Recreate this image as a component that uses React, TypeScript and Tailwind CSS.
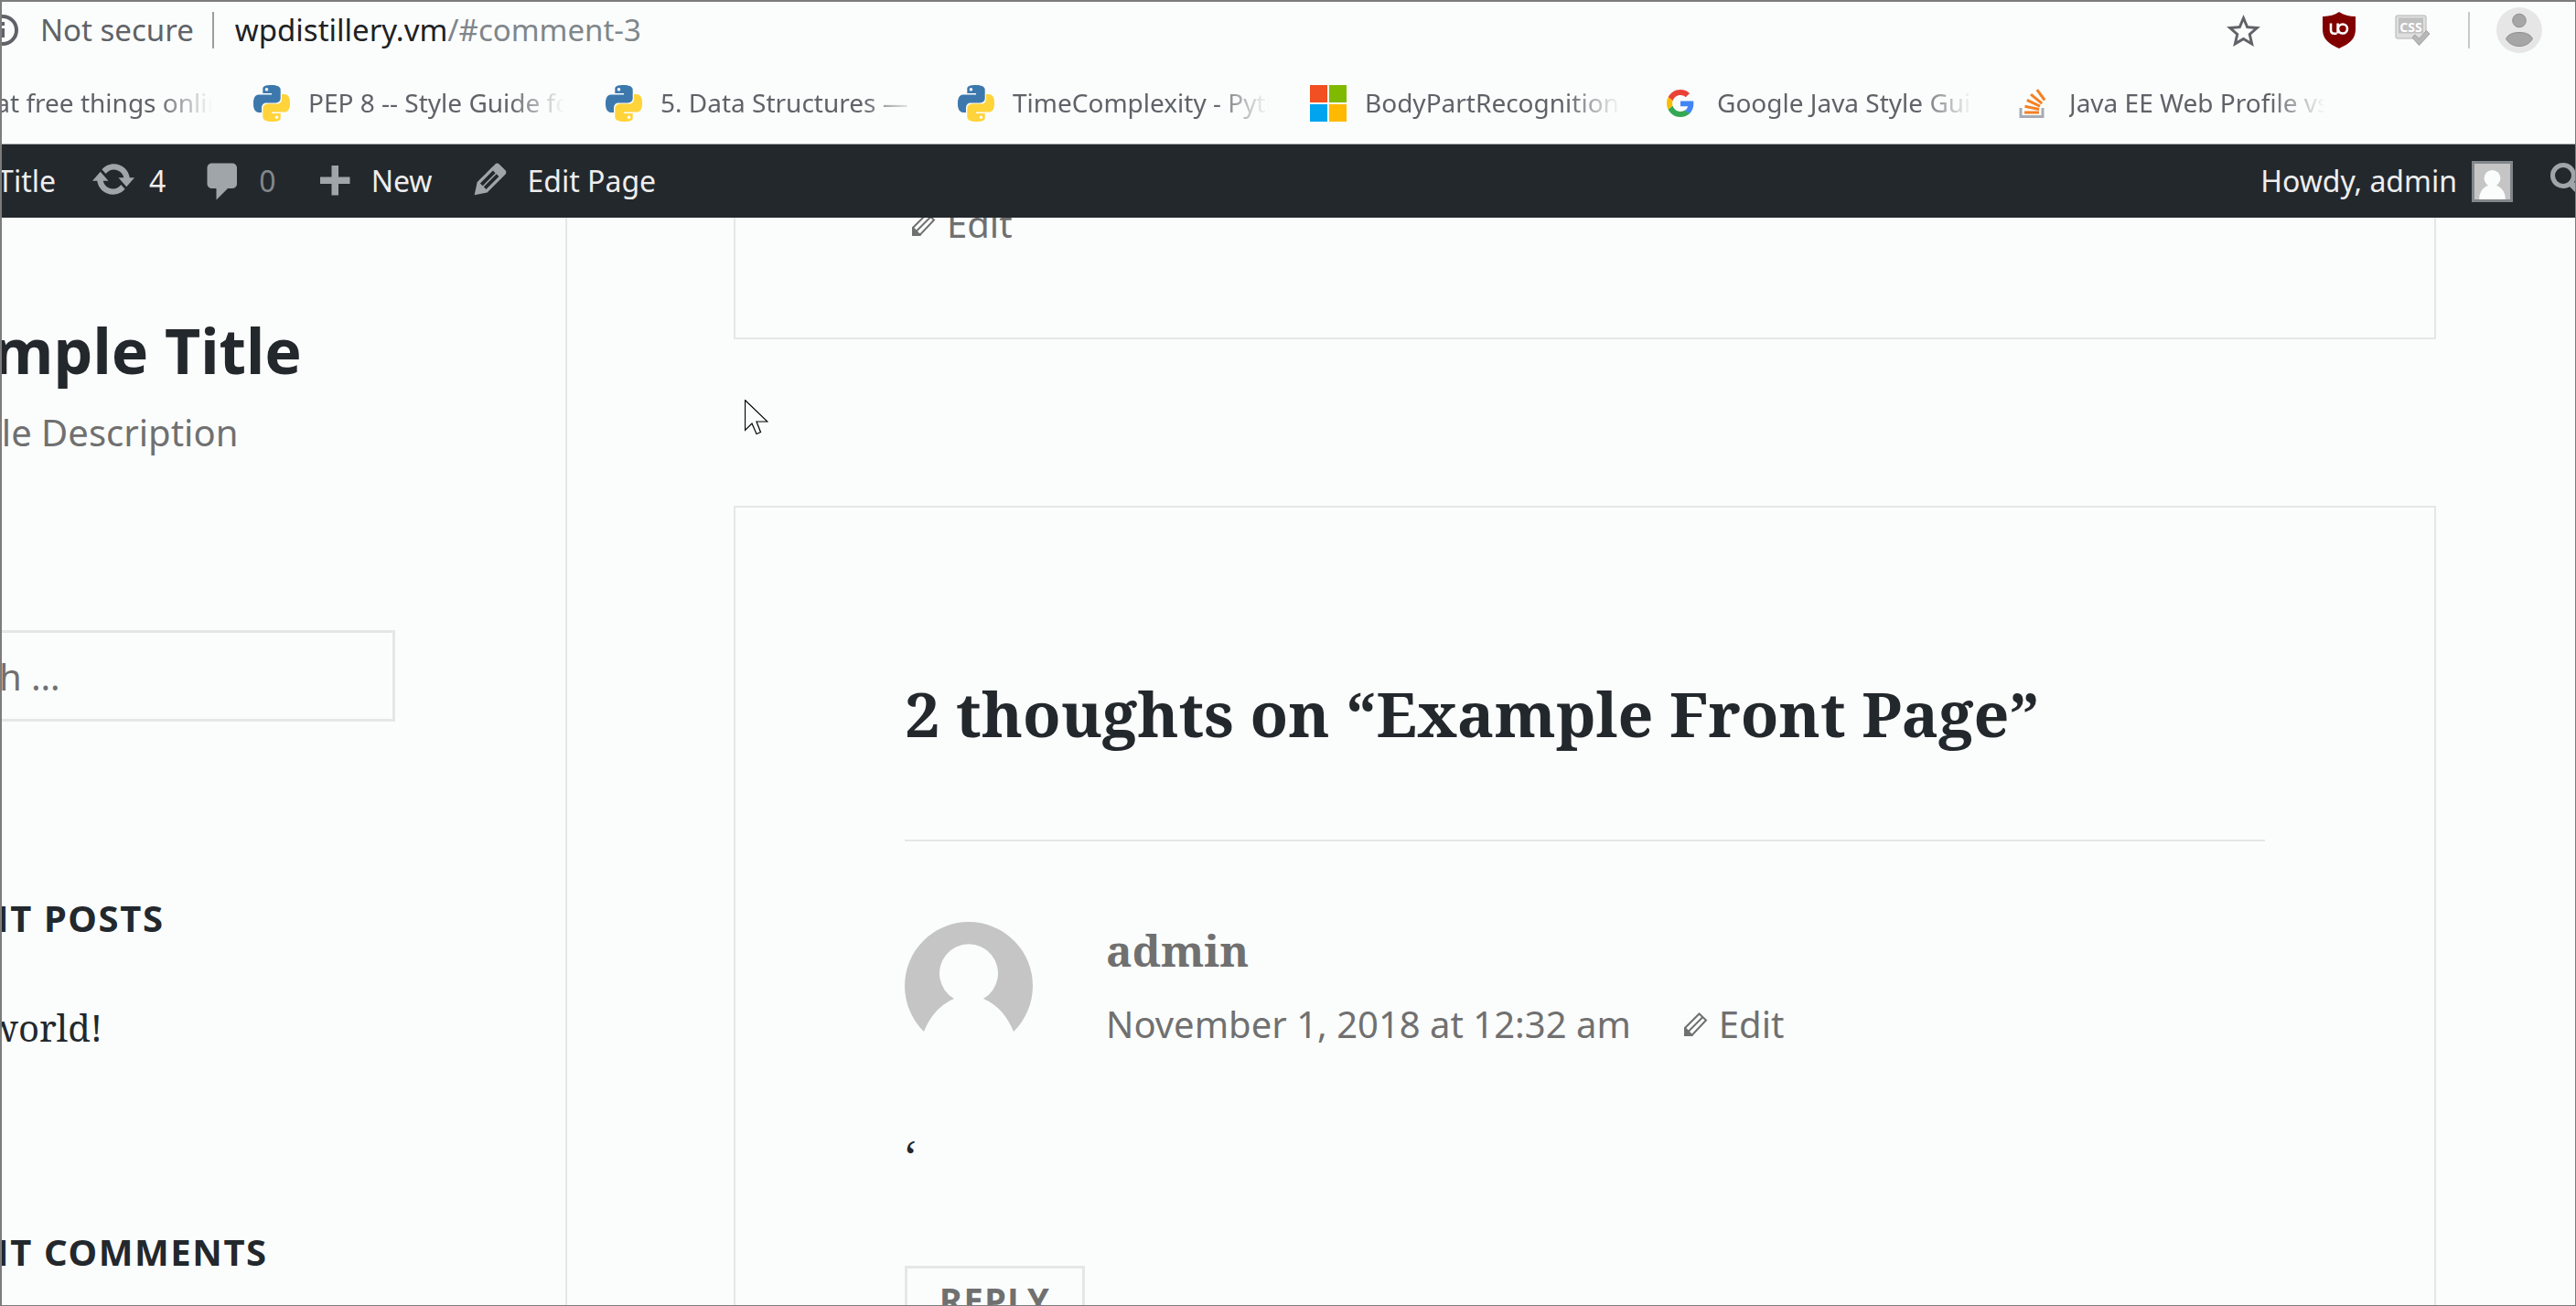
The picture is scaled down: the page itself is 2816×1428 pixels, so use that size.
import type { ReactNode } from 'react';

function InfoIcon() {
  return (
    <svg viewBox="0 0 34 34" className="-ml-4 size-[34px] shrink-0" fill="none" stroke="#5f6368" strokeWidth="4" aria-hidden="true">
      <circle cx="17" cy="17" r="15" />
      <path d="M17 15v10M17 8v4" />
    </svg>
  );
}

function StarIcon() {
  return (
    <svg viewBox="2 2 20 19" className="h-[35px] w-[37px]" fill="#5f6368" aria-hidden="true">
      <path fillRule="evenodd" d="M22 9.24l-7.19-.62L12 2 9.19 8.63 2 9.24l5.46 4.73L5.82 21 12 17.27 18.18 21l-1.63-7.03L22 9.24zM12 15.4l-3.76 2.27 1-4.28-3.32-2.88 4.38-.38L12 6.1l1.71 4.04 4.38.38-3.32 2.88 1 4.28L12 15.4z" />
    </svg>
  );
}

function ShieldIcon() {
  return (
    <svg viewBox="0 0 36 40" className="h-10 w-9" aria-hidden="true">
      <path d="M18 0C13 3.500 7 5 0 5v14c0 11 7 16 18 21 11-5 18-10 18-21V5C29 5 23 3.500 18 0z" fill="#800000" />
      <g fill="none" stroke="#fff" strokeWidth="2.600">
        <path d="M9 12.500v7.200c0 2.800 1.300 4 3.900 4h2.600M16.600 12.500v11" />
        <circle cx="22" cy="18.500" r="5" />
      </g>
    </svg>
  );
}

function CssIcon() {
  return (
    <svg viewBox="0 0 38 34" className="h-[34px] w-[38px]" aria-hidden="true">
      <rect x="1" y="1" width="33" height="25" rx="2.500" fill="#dedede" stroke="#c6c6c6" strokeWidth="1.500" />
      <rect x="4" y="3.500" width="27" height="17" fill="#c0c0c0" />
      <text x="17.500" y="18.500" textAnchor="middle" fontFamily="Open Sans, sans-serif" fontSize="14" fontWeight="700" fill="#fff">CSS</text>
      <path d="M19 25l3-3 4.500 4.500 8-9L38 21 26.500 33.500z" fill="#b8b8b8" stroke="#9e9e9e" strokeWidth="1" />
    </svg>
  );
}

function ProfileIcon() {
  return (
    <svg viewBox="0 0 50 50" className="size-[50px]" aria-hidden="true">
      <circle cx="25" cy="25" r="25" fill="#e6e6e6" />
      <g fill="#a6a6a6" stroke="#8f8f8f">
        <circle cx="25" cy="14.500" r="7.300" />
        <path d="M10.500 34.500C13 29 19 27.500 25 27.500s12 1.500 14.500 7C36 40 31 42.500 25 42.500s-11-2.500-14.500-8z" />
      </g>
    </svg>
  );
}

function PythonLogo() {
  return (
    <svg viewBox="0 0 24 24" className="size-10" aria-hidden="true">
      <path fill="#3d78ad" d="M14.25.18l.9.2.73.26.59.3.45.32.34.34.25.34.16.33.1.3.04.26.02.2-.01.13V8.5l-.05.63-.13.55-.21.46-.26.38-.3.31-.33.25-.35.19-.35.14-.33.1-.3.07-.26.04-.21.02H8.77l-.69.05-.59.14-.5.22-.41.27-.33.32-.27.35-.2.36-.15.37-.1.35-.07.32-.04.27-.02.21v3.06H3.17l-.21-.03-.28-.07-.32-.12-.35-.18-.36-.26-.36-.36-.35-.46-.32-.59-.28-.73-.21-.88-.14-1.05-.05-1.23.06-1.22.16-1.04.24-.87.32-.71.36-.57.4-.44.42-.33.42-.24.4-.16.36-.1.32-.05.24-.01h.16l.06.01h8.16v-.83H6.18l-.01-2.75-.02-.37.05-.34.11-.31.17-.28.25-.26.31-.23.38-.2.44-.18.51-.15.58-.12.64-.1.71-.06.77-.04.84-.02 1.27.05zm-6.3 1.98l-.23.33-.08.41.08.41.23.34.33.22.41.09.41-.09.33-.22.23-.34.08-.41-.08-.41-.23-.33-.33-.22-.41-.09-.41.09z" />
      <path fill="#ffd43b" d="M21.04 6.11l.28.06.32.12.35.18.36.27.36.35.35.47.32.59.28.73.21.88.14 1.04.05 1.23-.06 1.23-.16 1.04-.24.86-.32.71-.36.57-.4.45-.42.33-.42.24-.4.16-.36.09-.32.05-.24.02-.16-.01h-8.22v.82h5.84l.01 2.76.02.36-.05.34-.11.31-.17.29-.25.25-.31.24-.38.2-.44.17-.51.15-.58.13-.64.09-.71.07-.77.04-.84.01-1.27-.04-1.07-.14-.9-.2-.73-.25-.59-.3-.45-.33-.34-.34-.25-.34-.16-.33-.1-.3-.04-.25-.02-.2.01-.13v-5.34l.05-.64.13-.54.21-.46.26-.38.3-.32.33-.24.35-.2.35-.14.33-.1.3-.06.26-.04.21-.02.13-.01h5.84l.69-.05.59-.14.5-.21.41-.28.33-.32.27-.35.2-.36.15-.36.1-.35.07-.32.04-.28.02-.21V6.07h2.09l.14.01zm-6.47 14.25l-.23.33-.08.41.08.41.23.33.33.23.41.08.41-.08.33-.23.23-.33.08-.41-.08-.41-.23-.33-.33-.23-.41-.08-.41.08z" />
    </svg>
  );
}

function MicrosoftLogo() {
  return (
    <svg viewBox="0 0 40 40" className="size-10" aria-hidden="true">
      <path fill="#f25022" d="M0 0h19v19H0z" />
      <path fill="#7fba00" d="M21 0h19v19H21z" />
      <path fill="#00a4ef" d="M0 21h19v19H0z" />
      <path fill="#ffb900" d="M21 21h19v19H21z" />
    </svg>
  );
}

function GoogleLogo() {
  return (
    <svg viewBox="0 0 48 48" className="mx-[5px] size-[30px]" aria-hidden="true">
      <path fill="#ea4335" d="M24 9.500c3.540 0 6.710 1.220 9.210 3.600l6.850-6.850C35.900 2.380 30.470 0 24 0 14.620 0 6.510 5.380 2.560 13.220l7.980 6.190C12.430 13.720 17.740 9.500 24 9.500z" />
      <path fill="#4285f4" d="M46.980 24.550c0-1.570-.15-3.090-.38-4.550H24v9.020h12.940c-.58 2.960-2.260 5.480-4.780 7.180l7.730 6c4.510-4.180 7.090-10.360 7.090-17.650z" />
      <path fill="#fbbc05" d="M10.530 28.590c-.48-1.450-.76-2.990-.76-4.590s.27-3.140.76-4.590l-7.980-6.190C.92 16.460 0 20.120 0 24c0 3.880.92 7.540 2.560 10.780l7.970-6.190z" />
      <path fill="#34a853" d="M24 48c6.480 0 11.930-2.130 15.890-5.810l-7.730-6c-2.150 1.450-4.920 2.300-8.160 2.300-6.260 0-11.570-4.220-13.470-9.910l-7.980 6.190C6.510 42.620 14.620 48 24 48z" />
    </svg>
  );
}

function StackOverflowLogo() {
  return (
    <svg viewBox="0 0 30 32" className="mx-[5px] h-8 w-[30px]" fill="none" aria-hidden="true">
      <path d="M2 21v9.500h24V21" stroke="#a5acb3" strokeWidth="3" />
      <path d="M6 26h16M6.500 19.200l15.600 3.300M8.800 12.300l14.200 6.800M13 6.200l12.200 10M19.800 1.200l8.400 11.300" stroke="#f48024" strokeWidth="3" />
    </svg>
  );
}

function BarIcon({ d, viewBox = '0 0 20 20' }: { d: string; viewBox?: string }) {
  return (
    <svg viewBox={viewBox} className="-mt-1 size-[50px] shrink-0" fill="#a0a5aa" aria-hidden="true">
      <path fillRule="evenodd" d={d} />
    </svg>
  );
}

const ICON_UPDATE =
  'M10.200 3.280c3.530 0 6.430 2.610 6.920 6h2.080l-3.500 4-3.500-4h2.320c-.45-1.970-2.210-3.450-4.320-3.450-1.450 0-2.730.71-3.540 1.780L4.950 5.660C6.230 4.200 8.110 3.280 10.200 3.280zM9.800 16.720c-3.520 0-6.430-2.610-6.920-6H.8l3.500-4c1.170 1.330 2.330 2.670 3.500 4H5.480c.45 1.970 2.210 3.450 4.320 3.450 1.450 0 2.730-.71 3.540-1.780l1.710 1.950c-1.280 1.460-3.150 2.380-5.250 2.380z';
const ICON_COMMENT =
  'M5 2h9c1.100 0 2 .9 2 2v7c0 1.100-.9 2-2 2h-2l-5 5v-5H5c-1.100 0-2-.9-2-2V4c0-1.100.9-2 2-2z';
const ICON_PLUS = 'M17 9v3h-5v5H9v-5H4V9h5V4h3v5h5z';
const ICON_EDIT =
  'M13.890 3.390l2.710 2.720c.46.46.42 1.240.03 1.640l-8.010 8.020-5.560 1.160 1.160-5.580s7.600-7.630 7.990-8.030c.39-.39 1.220-.39 1.680.07zM11.160 6.180l-5.590 5.610 1.110 1.110 5.540-5.650zM8.190 14.410l5.580-5.600-1.070-1.080-5.590 5.600z';

function SquareAvatar() {
  return (
    <svg viewBox="0 0 140 140" className="size-[45px] border-3 border-[#82878c]" aria-hidden="true">
      <rect width="140" height="140" fill="#c5c5c5" />
      <circle cx="70" cy="57" r="32" fill="#fbfdfc" />
      <path d="M54 84C38 91 26 103 21 121c-2 6-2 12-2 19h102c0-7 0-13-2-19-5-18-17-30-33-37z" fill="#fbfdfc" />
    </svg>
  );
}

function RoundAvatar() {
  return (
    <svg viewBox="0 0 140 140" className="size-[140px] shrink-0" aria-hidden="true">
      <path d="M21 120A70 70 0 1 1 119 120C112 103 102 91 86 84A32 32 0 1 0 54 84C38 91 28 103 21 120z" fill="#c5c5c5" />
    </svg>
  );
}

function EditLink() {
  return (
    <a href="#edit" className="inline-flex items-center gap-3 text-[40px] leading-[60px] text-[#707070]">
      <svg viewBox="0 0 28 28" className="size-7" fill="none" stroke="#707070" strokeWidth="2" aria-hidden="true">
        <path d="M3 26v-8L18.500 2.500 26 9.500 10.500 26zM3 18l7.500 8M7 21.500L22 6.500" />
        <path d="M3 19.500l6.500 6.500H3z" fill="#707070" />
      </svg>
      Edit
    </a>
  );
}

function Bookmark({ icon, children }: { icon?: ReactNode; children: string }) {
  return (
    <a href="#bookmark" className="flex shrink-0 items-center gap-5">
      {icon}
      <span className="w-[280px] overflow-hidden whitespace-nowrap pb-0.5 [mask-image:linear-gradient(to_right,black_calc(100%_-_60px),transparent)]">
        {children}
      </span>
    </a>
  );
}

function AddressBar() {
  return (
    <div className="flex h-[62px] items-center pr-9 text-[33px]">
      <InfoIcon />
      <span className="ml-6 text-[#5f6368]">Not secure</span>
      <span className="ml-5 h-10 w-0.5 bg-[#9a9da0]" />
      <span className="ml-[23px] text-[#202124]">
        wpdistillery.vm<span className="text-[#80868b]">/#comment-3</span>
      </span>
      <div className="ml-auto flex items-center">
        <button aria-label="Bookmark this page"><StarIcon /></button>
        <button aria-label="uBlock Origin" className="ml-[68px]"><ShieldIcon /></button>
        <button aria-label="CSS checker" className="ml-[43px]"><CssIcon /></button>
        <span className="ml-[42px] h-10 w-0.5 bg-[#c8c8c8]" />
        <button aria-label="Profile" className="ml-[29px]"><ProfileIcon /></button>
      </div>
    </div>
  );
}

function BookmarksBar() {
  return (
    <nav className="flex h-[94px] items-center gap-[45px] overflow-hidden border-b border-[#a9abac] pt-1 text-[28px] text-[#5f6368]">
      <div className="-ml-[50px] shrink-0">
        <Bookmark>What free things online</Bookmark>
      </div>
      <Bookmark icon={<PythonLogo />}>PEP 8 -- Style Guide for Python</Bookmark>
      <Bookmark icon={<PythonLogo />}>5. Data Structures — Python</Bookmark>
      <Bookmark icon={<PythonLogo />}>TimeComplexity - Python</Bookmark>
      <Bookmark icon={<MicrosoftLogo />}>BodyPartRecognition.</Bookmark>
      <Bookmark icon={<GoogleLogo />}>Google Java Style Guide</Bookmark>
      <Bookmark icon={<StackOverflowLogo />}>Java EE Web Profile vs</Bookmark>
    </nav>
  );
}

function AdminBar() {
  return (
    <nav className="flex h-20 shrink-0 items-center gap-[38px] overflow-hidden bg-[#23282d] text-[32px] text-[#eeeeee]">
      <a href="#site" className="flex w-[59px] justify-end whitespace-nowrap">Example Title</a>
      <a href="#updates" className="flex items-center gap-3.5"><BarIcon d={ICON_UPDATE} />4</a>
      <a href="#comments" className="flex items-center gap-3.5 text-[#82878c]"><BarIcon d={ICON_COMMENT} viewBox="0 -1 20 20" />0</a>
      <a href="#new" className="flex items-center gap-4"><BarIcon d={ICON_PLUS} />New</a>
      <a href="#edit-page" className="flex items-center gap-4"><BarIcon d={ICON_EDIT} />Edit Page</a>
      <a href="#account" className="ml-auto flex items-center gap-4">
        Howdy, admin
        <SquareAvatar />
      </a>
      <button aria-label="Search" className="-mr-5 shrink-0">
        <svg viewBox="0 0 50 50" className="size-[50px]" fill="none" stroke="#a0a5aa" aria-hidden="true">
          <circle cx="17" cy="19" r="11.500" strokeWidth="5" />
          <path d="M25 27l12 12" strokeWidth="7" />
        </svg>
      </button>
    </nav>
  );
}

function Sidebar() {
  return (
    <aside className="w-[618px] shrink-0 overflow-hidden border-r-2 border-[#e6e6e6]">
      <div className="-ml-32 mr-[186px] whitespace-nowrap pt-[105px]">
        <h1 className="text-[68px] font-bold leading-[80px]">
          <a href="#home">Example Title</a>
        </h1>
        <p className="mt-5 text-[40px] leading-[60px] text-[#707070]">Example Description</p>
        <input
          type="search"
          aria-label="Search for"
          placeholder="Search …"
          className="mt-[186px] block h-[100px] w-full border-3 border-[#e6e6e6] bg-transparent px-5 text-[40px] text-[#707070] outline-none placeholder:text-[#707070] placeholder:opacity-100"
        />
        <h2 className="mt-[185px] text-[40px] font-bold uppercase leading-[60px] tracking-[0.04em]">Recent Posts</h2>
        <a href="#hello-world" className="mt-[60px] block font-['Noto_Serif',serif] text-[40px] leading-[60px]">Hello world!</a>
        <h2 className="mt-[185px] text-[40px] font-bold uppercase leading-[60px] tracking-[0.04em]">Recent Comments</h2>
      </div>
    </aside>
  );
}

function Comment() {
  return (
    <article className="pt-[88px]">
      <header className="flex gap-20">
        <RoundAvatar />
        <div>
          <b className="block font-['Noto_Serif',serif] text-[48px] leading-[62px] text-[#707070]">admin</b>
          <div className="mt-5 flex items-center gap-14">
            <a href="#comment-3" className="text-[40px] leading-[60px] text-[#707070]">November 1, 2018 at 12:32 am</a>
            <EditLink />
          </div>
        </div>
      </header>
      <p className="mt-[74px] font-['Noto_Serif',serif] text-[48px] leading-[80px]">‘</p>
      <button className="mt-20 block border-3 border-[#e6e6e6] px-[35px] py-2 text-[38px] font-bold uppercase leading-[52px] tracking-[0.04em] text-[#707070]">
        Reply
      </button>
    </article>
  );
}

export default function App() {
  return (
    <div className="relative flex h-screen flex-col overflow-hidden border-l-2 border-t-2 border-r border-b border-[#7c7c7c] bg-[#fbfdfc] font-['Noto_Sans','Open_Sans',sans-serif] text-[#23282d]">
      <header className="shrink-0">
        <AddressBar />
        <BookmarksBar />
      </header>
      <AdminBar />
      <div className="flex min-h-0 flex-1">
        <Sidebar />
        <main className="min-w-0 flex-1 overflow-hidden pl-[182px] pr-[152px]">
          <section className="-mt-[25px] border-2 border-[#e6e6e6] px-[185px] pb-[94px]">
            <div className="ml-1.5">
              <EditLink />
            </div>
          </section>
          <section className="mt-[182px] border-2 border-[#e6e6e6] px-[185px] pb-[185px] pt-[185px]">
            <h2 className="border-b-2 border-[#e6e6e6] pb-[98px] font-['Noto_Serif',serif] text-[68px] font-bold leading-[80px]">
              2 thoughts on “Example Front Page”
            </h2>
            <Comment />
          </section>
        </main>
      </div>
      <svg viewBox="0 0 26 39" className="absolute left-[812px] top-[435px] h-[39px] w-[26px]" aria-hidden="true">
        <path d="M.5.500v33l7.500-7.500 5 11.500 4.500-2-4.500-11.500H25z" fill="#fbfdfc" stroke="#000" strokeWidth="1.200" />
      </svg>
    </div>
  );
}
